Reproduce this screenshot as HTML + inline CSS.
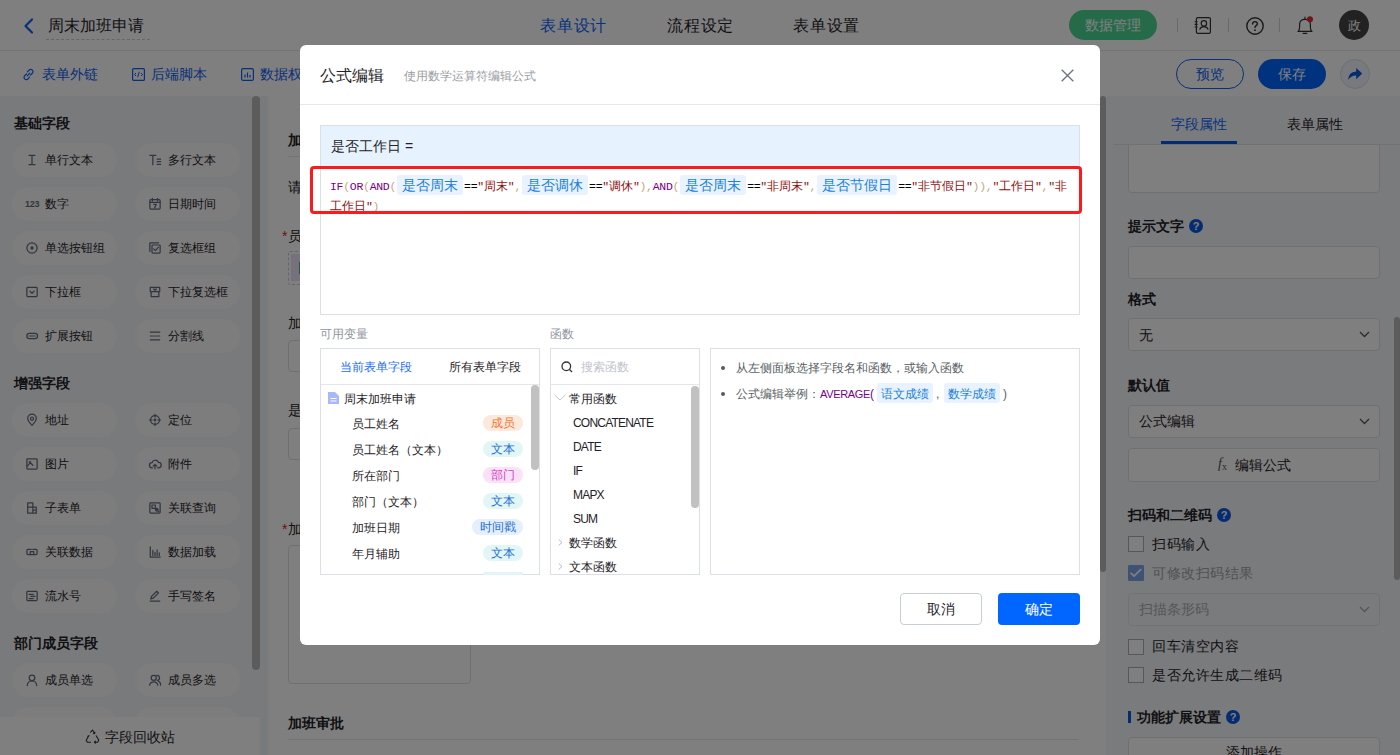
<!DOCTYPE html>
<html><head><meta charset="utf-8">
<style>
*{box-sizing:border-box;margin:0;padding:0}
html,body{width:1400px;height:755px;overflow:hidden;background:#fff;font-family:"Liberation Sans",sans-serif;color:#1f2329}
.a{position:absolute}
.t{position:absolute;white-space:nowrap;line-height:1}
svg{position:absolute;overflow:visible}
/* header */
#hdr{left:0;top:0;width:1400px;height:51px;background:#fff;border-bottom:1px solid #e8e8e8}
#tb{left:0;top:51px;width:1400px;height:45px;background:#fff}
#side{left:0;top:96px;width:268px;height:659px;background:#f3f4f6}
.sec{position:absolute;left:14px;font-size:14px;font-weight:bold;color:#1f2329;line-height:1}
.chip{position:absolute;width:105px;height:34px;border-radius:17px;background:#fafafb}
.chip span{position:absolute;left:33px;top:11px;font-size:12px;line-height:12px;color:#1f2329;white-space:nowrap}
.chip svg{left:14px;top:11px}
#canvas{left:268px;top:96px;width:832px;height:659px;background:#fff}
#rp{left:1106px;top:96px;width:294px;height:659px;background:#f5f6f8}
.inp{position:absolute;left:1128px;width:252px;border:1px solid #dfe1e5;border-radius:4px;background:#fff}
.lbl{position:absolute;left:1128px;font-size:14px;font-weight:bold;line-height:1;color:#1f2329;white-space:nowrap}
.cb{position:absolute;left:1128px;width:16px;height:16px;border:1px solid #a9aeb8;border-radius:0;background:#fff}
.cbt{position:absolute;left:1152px;font-size:14px;letter-spacing:0.5px;line-height:1;color:#1f2329;white-space:nowrap}
.help{position:absolute;width:14px;height:14px;border-radius:50%;background:#0a58e0;color:#fff;font-size:11px;font-weight:bold;line-height:14px;text-align:center}
#ov{left:0;top:0;width:1400px;height:755px;background:rgba(0,0,0,.5)}
/* modal */
#modal{left:300px;top:45px;width:800px;height:600px;background:#fff;border-radius:6px}
.cm{font-family:"Liberation Mono",monospace;font-size:11.5px;letter-spacing:-0.3px}
.cj{font-size:12px;letter-spacing:0}
.kw{color:#770088}.br{color:#c8a678}.st{color:#8e0e0e}.op{color:#000}
.ftag{display:inline-block;letter-spacing:0;background:#e8f3ff;color:#1a7fd9;font-family:"Liberation Sans",sans-serif;font-size:14px;line-height:20px;height:20px;padding:0 5px;border-radius:3px;vertical-align:top;margin:0 1px}
.cm>span:not(.ftag){position:relative;top:2px}
.vrow{position:absolute;left:352px;font-size:12px;line-height:1;color:#1f2329;white-space:nowrap}
.vtag{position:absolute;height:16px;border-radius:8px;font-size:12px;line-height:16px;text-align:center}
.fn{position:absolute;left:573px;font-size:12px;letter-spacing:-0.8px;line-height:1;color:#1f2329;white-space:nowrap}
</style></head><body>

<!-- ============ HEADER ============ -->
<div id="hdr" class="a"></div>
<svg style="left:23px;top:18px" width="11" height="16" viewBox="0 0 11 16"><path d="M9 1.5 L2.5 8 L9 14.5" fill="none" stroke="#1060f0" stroke-width="2.2" stroke-linecap="round" stroke-linejoin="round"/></svg>
<div class="t" style="left:48px;top:18px;font-size:16px;color:#1f2329">周末加班申请</div>
<div class="a" style="left:46px;top:39px;width:104px;border-top:1px dashed #c9cdd4"></div>
<div class="t" style="left:540px;top:18px;font-size:16px;letter-spacing:0.8px;color:#0a66ff">表单设计</div>
<div class="t" style="left:667px;top:18px;font-size:16px;letter-spacing:0.8px;color:#1f2329">流程设定</div>
<div class="t" style="left:793px;top:18px;font-size:16px;letter-spacing:0.8px;color:#1f2329">表单设置</div>
<div class="a" style="left:1069px;top:10px;width:88px;height:30px;border-radius:15px;background:#4ad694"></div>
<div class="t" style="left:1085px;top:18px;font-size:14px;color:#fff">数据管理</div>
<div class="a" style="left:1177px;top:18px;width:1px;height:14px;background:#d0d3d9"></div>
<div class="a" style="left:1228px;top:18px;width:1px;height:14px;background:#d0d3d9"></div>
<div class="a" style="left:1279px;top:18px;width:1px;height:14px;background:#d0d3d9"></div>
<!-- contacts icon -->
<svg style="left:1194px;top:17px" width="18" height="17" viewBox="0 0 18 17" fill="none" stroke="#333" stroke-width="1.2"><rect x="2.4" y="0.6" width="14" height="15.8" rx="1.4"/><circle cx="9.9" cy="6.4" r="2.7"/><path d="M5.6 12.6 Q6.6 9.6 9.9 9.6 Q13.2 9.6 14.2 12.6"/><path d="M0.6 4.8h3M0.6 7.4h3M0.6 10h3" stroke-width="1.1"/></svg>
<!-- help icon -->
<svg style="left:1246px;top:17px" width="18" height="18" viewBox="0 0 18 18"><circle cx="9" cy="9" r="8.2" fill="none" stroke="#333" stroke-width="1.4"/><path d="M6.6 7 Q6.6 4.6 9 4.6 Q11.4 4.6 11.4 6.8 Q11.4 8.2 9.6 9 Q9 9.4 9 10.6" fill="none" stroke="#333" stroke-width="1.4" stroke-linecap="round"/><circle cx="9" cy="13.2" r="0.9" fill="#333"/></svg>
<!-- bell -->
<svg style="left:1297px;top:16px" width="16" height="18" viewBox="0 0 16 18" fill="none" stroke="#333" stroke-width="1.2" stroke-linejoin="round"><path d="M1 15.4 Q2.6 14.2 2.6 11.6 L2.6 8.4 Q2.6 3.4 8 3.4 Q13.4 3.4 13.4 8.4 L13.4 11.6 Q13.4 14.2 15 15.4 Z"/><path d="M8 1.2v2.2M6.2 17.4h3.6" stroke-linecap="round"/><circle cx="13" cy="3.2" r="3" fill="#e02a2a" stroke="none"/></svg>
<div class="a" style="left:1339px;top:10px;width:30px;height:30px;border-radius:50%;background:#444"></div>
<div class="t" style="left:1348px;top:19px;font-size:13px;color:#fff">政</div>

<!-- ============ TOOLBAR ============ -->
<div id="tb" class="a"></div>
<svg style="left:22px;top:68px" width="13" height="13" viewBox="0 0 13 13"><path d="M5.2 7.8 L7.8 5.2 M4.6 5.8 L2.4 8 A2.3 2.3 0 0 0 5.6 11.2 L7.6 9.2 M8.4 7.2 L10.6 5 A2.3 2.3 0 0 0 7.4 1.8 L5.4 3.8" fill="none" stroke="#1060f0" stroke-width="1.2" stroke-linecap="round"/></svg>
<div class="t" style="left:42px;top:67px;font-size:14px;color:#1060f0">表单外链</div>
<svg style="left:132px;top:68px" width="13" height="13" viewBox="0 0 13 13"><rect x="0.6" y="0.6" width="11.8" height="11.8" rx="1" fill="none" stroke="#1060f0" stroke-width="1.2"/><path d="M4 5 L2.6 6.5 L4 8 M9 5 L10.4 6.5 L9 8 M7.3 3.8 L5.7 9.2" fill="none" stroke="#1060f0" stroke-width="1"/></svg>
<div class="t" style="left:151px;top:67px;font-size:14px;color:#1060f0">后端脚本</div>
<svg style="left:241px;top:68px" width="13" height="13" viewBox="0 0 13 13"><rect x="0.6" y="0.6" width="11.8" height="11.8" rx="1.5" fill="none" stroke="#1060f0" stroke-width="1.2"/><path d="M4 9.5V6.5M6.5 9.5V4.5M9 9.5V7" stroke="#1060f0" stroke-width="1.2"/></svg>
<div class="t" style="left:260px;top:67px;font-size:14px;color:#1060f0">数据权限</div>
<div class="a" style="left:1176px;top:59px;width:68px;height:30px;border-radius:15px;border:1px solid #1060f0;background:#fff"></div>
<div class="t" style="left:1196px;top:67px;font-size:14px;color:#1060f0">预览</div>
<div class="a" style="left:1258px;top:59px;width:68px;height:30px;border-radius:15px;background:#0066ff"></div>
<div class="t" style="left:1278px;top:67px;font-size:14px;color:#fff">保存</div>
<div class="a" style="left:1340px;top:59px;width:30px;height:30px;border-radius:50%;border:1px solid #d6def0;background:#f0f4fd"></div>
<svg style="left:1347px;top:67px" width="16" height="14" viewBox="0 0 16 14"><path d="M1 13 Q1.5 5 9.2 4.6 L9.2 1 L15.2 6.6 L9.2 12.2 L9.2 8.4 Q4.2 8.2 1 13 Z" fill="#0a58e0"/></svg>

<!-- ============ SIDEBAR ============ -->
<div id="side" class="a"></div>
<div class="sec" style="top:116px">基础字段</div>
<div class="sec" style="top:376px">增强字段</div>
<div class="sec" style="top:636px">部门成员字段</div>
<div id="chips"><div class="chip" style="left:12px;top:143px"><svg width="12" height="12" viewBox="0 0 14 14" fill="none" stroke="#636b7a" stroke-width="1.45" stroke-linecap="round" stroke-linejoin="round"><path d="M3.5 1.5h7M7 1.5v11M3.5 12.5h7"/></svg><span>单行文本</span></div>
<div class="chip" style="left:135px;top:143px"><svg width="12" height="12" viewBox="0 0 14 14" fill="none" stroke="#636b7a" stroke-width="1.45" stroke-linecap="round" stroke-linejoin="round"><path d="M1 1.5h7M4.5 1.5v11M9.5 6h4M9.5 9h4M9.5 12h4"/></svg><span>多行文本</span></div>
<div class="chip" style="left:12px;top:187px"><div style="position:absolute;left:13px;top:12px;font-size:9px;line-height:10px;font-weight:bold;color:#636b7a;letter-spacing:-0.2px">123</div><span>数字</span></div>
<div class="chip" style="left:135px;top:187px"><svg width="12" height="12" viewBox="0 0 14 14" fill="none" stroke="#636b7a" stroke-width="1.45" stroke-linecap="round" stroke-linejoin="round"><rect x="1" y="2" width="12" height="11" rx="1.2"/><path d="M1 5h12M4 0.5v3M10 0.5v3M5.5 7.5h3L6.5 11.5"/></svg><span>日期时间</span></div>
<div class="chip" style="left:12px;top:231px"><svg width="12" height="12" viewBox="0 0 14 14" fill="none" stroke="#636b7a" stroke-width="1.45" stroke-linecap="round" stroke-linejoin="round"><circle cx="7" cy="7" r="6"/><circle cx="7" cy="7" r="1.2" fill="#636b7a"/></svg><span>单选按钮组</span></div>
<div class="chip" style="left:135px;top:231px"><svg width="12" height="12" viewBox="0 0 14 14" fill="none" stroke="#636b7a" stroke-width="1.45" stroke-linecap="round" stroke-linejoin="round"><path d="M1 11V1h10"/><rect x="3.5" y="3.5" width="9.5" height="9.5" rx="1"/><path d="M5.5 8l2 2 3.5-4"/></svg><span>复选框组</span></div>
<div class="chip" style="left:12px;top:275px"><svg width="12" height="12" viewBox="0 0 14 14" fill="none" stroke="#636b7a" stroke-width="1.45" stroke-linecap="round" stroke-linejoin="round"><rect x="1" y="1.5" width="12" height="11" rx="1"/><path d="M4.5 6l2.5 2.5L9.5 6"/></svg><span>下拉框</span></div>
<div class="chip" style="left:135px;top:275px"><svg width="12" height="12" viewBox="0 0 14 14" fill="none" stroke="#636b7a" stroke-width="1.45" stroke-linecap="round" stroke-linejoin="round"><path d="M1.5 1.5h11v5h-11zM2.5 6.5v6h9v-6M5.5 3.5l1.5 1.5 1.5-1.5"/></svg><span>下拉复选框</span></div>
<div class="chip" style="left:12px;top:319px"><svg width="12" height="12" viewBox="0 0 14 14" fill="none" stroke="#636b7a" stroke-width="1.45" stroke-linecap="round" stroke-linejoin="round"><rect x="1" y="4" width="12.5" height="6" rx="3"/><path d="M4 7h6.5"/></svg><span>扩展按钮</span></div>
<div class="chip" style="left:135px;top:319px"><svg width="12" height="12" viewBox="0 0 14 14" fill="none" stroke="#636b7a" stroke-width="1.45" stroke-linecap="round" stroke-linejoin="round"><path d="M1.5 2.5h11M1.5 7h3M6 7h2M9.5 7h3M1.5 11.5h11"/></svg><span>分割线</span></div>
<div class="chip" style="left:12px;top:403px"><svg width="12" height="12" viewBox="0 0 14 14" fill="none" stroke="#636b7a" stroke-width="1.45" stroke-linecap="round" stroke-linejoin="round"><path d="M7 13.2C4 10 2 7.5 2 5.2A5 5 0 0 1 12 5.2C12 7.5 10 10 7 13.2Z"/><circle cx="7" cy="5.3" r="1.8"/></svg><span>地址</span></div>
<div class="chip" style="left:135px;top:403px"><svg width="12" height="12" viewBox="0 0 14 14" fill="none" stroke="#636b7a" stroke-width="1.45" stroke-linecap="round" stroke-linejoin="round"><circle cx="7" cy="7" r="5.2"/><circle cx="7" cy="7" r="1" fill="#636b7a"/><path d="M7 0.5v3M7 10.5v3M0.5 7h3M10.5 7h3"/></svg><span>定位</span></div>
<div class="chip" style="left:12px;top:447px"><svg width="12" height="12" viewBox="0 0 14 14" fill="none" stroke="#636b7a" stroke-width="1.45" stroke-linecap="round" stroke-linejoin="round"><rect x="1" y="1" width="12" height="12" rx="1"/><path d="M1.5 9.5L5 5.5l3 3M3.5 4.5h2"/></svg><span>图片</span></div>
<div class="chip" style="left:135px;top:447px"><svg width="12" height="12" viewBox="0 0 14 14" fill="none" stroke="#636b7a" stroke-width="1.45" stroke-linecap="round" stroke-linejoin="round"><path d="M4 11.5H3.5A3 3 0 0 1 3.5 5.5 4 4 0 0 1 11 5 3 3 0 0 1 11 11.5H10M7 12.5V7.5M5 9.5l2-2 2 2"/></svg><span>附件</span></div>
<div class="chip" style="left:12px;top:491px"><svg width="12" height="12" viewBox="0 0 14 14" fill="none" stroke="#636b7a" stroke-width="1.45" stroke-linecap="round" stroke-linejoin="round"><path d="M2 1h6v12H2zM2 6h10v7H8M8 9.5h4"/></svg><span>子表单</span></div>
<div class="chip" style="left:135px;top:491px"><svg width="12" height="12" viewBox="0 0 14 14" fill="none" stroke="#636b7a" stroke-width="1.45" stroke-linecap="round" stroke-linejoin="round"><rect x="1" y="1" width="12" height="12" rx="1"/><path d="M3.5 3.5h4v4h-4zM8.5 8.5l3 3"/><circle cx="9" cy="9" r="1.5"/></svg><span>关联查询</span></div>
<div class="chip" style="left:12px;top:535px"><svg width="12" height="12" viewBox="0 0 14 14" fill="none" stroke="#636b7a" stroke-width="1.45" stroke-linecap="round" stroke-linejoin="round"><path d="M6 4H2.5A1.5 1.5 0 0 0 1 5.5v3A1.5 1.5 0 0 0 2.5 10H6M8 4h3.5A1.5 1.5 0 0 1 13 5.5v3A1.5 1.5 0 0 1 11.5 10H8M5 6.5h4v3.5H5z"/></svg><span>关联数据</span></div>
<div class="chip" style="left:135px;top:535px"><svg width="12" height="12" viewBox="0 0 14 14" fill="none" stroke="#636b7a" stroke-width="1.45" stroke-linecap="round" stroke-linejoin="round"><path d="M1.5 1v12h11.5M4.5 5v6M7 7.5v3.5M9.5 4.5v6.5M12 8v3"/></svg><span>数据加载</span></div>
<div class="chip" style="left:12px;top:579px"><svg width="12" height="12" viewBox="0 0 14 14" fill="none" stroke="#636b7a" stroke-width="1.45" stroke-linecap="round" stroke-linejoin="round"><rect x="1" y="1.5" width="12" height="11" rx="1"/><path d="M3.5 5h5M5.5 7.5h5M3.5 10h5"/></svg><span>流水号</span></div>
<div class="chip" style="left:135px;top:579px"><svg width="12" height="12" viewBox="0 0 14 14" fill="none" stroke="#636b7a" stroke-width="1.45" stroke-linecap="round" stroke-linejoin="round"><path d="M2 10.5l1-3 6-6 2 2-6 6zM1.5 13h11"/></svg><span>手写签名</span></div>
<div class="chip" style="left:12px;top:663px"><svg width="12" height="12" viewBox="0 0 14 14" fill="none" stroke="#636b7a" stroke-width="1.45" stroke-linecap="round" stroke-linejoin="round"><circle cx="7" cy="4.5" r="3.3"/><path d="M1.5 13.5A5.5 5.5 0 0 1 12.5 13.5"/></svg><span>成员单选</span></div>
<div class="chip" style="left:135px;top:663px"><svg width="12" height="12" viewBox="0 0 14 14" fill="none" stroke="#636b7a" stroke-width="1.45" stroke-linecap="round" stroke-linejoin="round"><circle cx="5.5" cy="4.5" r="3"/><path d="M0.8 13A4.8 4.8 0 0 1 10.2 13M9 1.5A3 3 0 0 1 9.5 7.5M11 8.5A4.5 4.5 0 0 1 13.5 13"/></svg><span>成员多选</span></div>
<div class="chip" style="left:12px;top:707px"><svg width="12" height="12" viewBox="0 0 14 14" fill="none" stroke="#636b7a" stroke-width="1.45" stroke-linecap="round" stroke-linejoin="round"><rect x="1.5" y="1.5" width="11" height="11" rx="2"/></svg><span>部门单选</span></div>
<div class="chip" style="left:135px;top:707px"><svg width="12" height="12" viewBox="0 0 14 14" fill="none" stroke="#636b7a" stroke-width="1.45" stroke-linecap="round" stroke-linejoin="round"><rect x="1.5" y="1.5" width="11" height="11" rx="2"/></svg><span>部门多选</span></div></div><!--/chips-->
<div class="a" style="left:252px;top:96px;width:8px;height:574px;border-radius:4px;background:#b8b8b8"></div>
<div class="a" style="left:0;top:717px;width:260px;height:38px;background:#fff"></div>
<svg style="left:85px;top:729px" width="15" height="15" viewBox="0 0 15 15" fill="none" stroke="#333" stroke-width="1.1" stroke-linecap="round" stroke-linejoin="round"><path d="M5.6 3.2L7.5 1 9.6 4.4M8.6 4.6l1.1-0.2 0.2-1.1M11.2 6.8l2.6 4.4-1.2 2H9.4M10.4 12.2l-1 1 1 1M5.6 13.2H2.4l-1.2-2 2.4-4.2M2.6 7.2l1 0.2 0.4-1"/></svg>
<div class="t" style="left:105px;top:730px;font-size:14px;color:#1f2329">字段回收站</div>

<!-- ============ CANVAS ============ -->
<div id="canvas" class="a"></div>
<div class="t" style="left:288px;top:133px;font-size:14px;font-weight:bold;color:#1f2329">加班申请</div>
<div class="a" style="left:288px;top:156px;width:790px;height:1px;background:#e5e6eb"></div>
<div class="t" style="left:288px;top:180px;font-size:14px;color:#1f2329">请填写</div>
<div class="t" style="left:282px;top:229px;font-size:14px;color:#1f2329"><span style="color:#e02020;margin-right:1px">*</span>员工姓名</div>
<div class="a" style="left:288px;top:251px;width:182px;height:34px;border:1px dashed #c9cdd4;border-radius:2px"></div>
<div class="a" style="left:291px;top:254px;width:60px;height:27px;background:#efe0fa"></div><div class="a" style="left:299px;top:262px;width:3px;height:12px;background:#3fbf6f"></div>
<div class="t" style="left:288px;top:316px;font-size:14px;color:#1f2329">加班日期</div>
<div class="a" style="left:288px;top:340px;width:182px;height:32px;border:1px solid #dfe1e5;border-radius:4px"></div>
<div class="t" style="left:288px;top:403px;font-size:14px;color:#1f2329">是否工作日</div>
<div class="a" style="left:288px;top:428px;width:182px;height:32px;border:1px solid #dfe1e5;border-radius:4px"></div>
<div class="t" style="left:282px;top:522px;font-size:14px;color:#1f2329"><span style="color:#e02020;margin-right:1px">*</span>加班事由</div>
<div class="a" style="left:288px;top:545px;width:183px;height:139px;border:1px solid #dfe1e5;border-radius:4px"></div>
<div class="t" style="left:288px;top:716px;font-size:14px;font-weight:bold;color:#1f2329">加班审批</div>
<div class="a" style="left:288px;top:739px;width:790px;height:1px;background:#e5e6eb"></div>

<!-- ============ RIGHT PANEL ============ -->
<div id="rp" class="a"></div>
<div id="rpc"><div class="a" style="left:1100px;top:96px;width:6px;height:476px;border-radius:3px;background:#b9b9b9"></div>
<div class="t" style="left:1171px;top:117px;font-size:14px;color:#0a66ff">字段属性</div>
<div class="t" style="left:1287px;top:117px;font-size:14px;color:#1f2329">表单属性</div>
<div class="a" style="left:1114px;top:144px;width:286px;height:1px;background:#e0e2e6"></div>
<div class="a" style="left:1161px;top:141px;width:76px;height:3px;background:#0a58e0"></div>
<div class="inp" style="top:130px;height:63px"></div>
<div class="a" style="left:1106px;top:96px;width:294px;height:49px;background:#f5f6f8"></div>
<div class="t" style="left:1171px;top:117px;font-size:14px;color:#0a66ff">字段属性</div>
<div class="t" style="left:1287px;top:117px;font-size:14px;color:#1f2329">表单属性</div>
<div class="a" style="left:1114px;top:144px;width:286px;height:1px;background:#e0e2e6"></div>
<div class="a" style="left:1161px;top:141px;width:76px;height:3px;background:#0a58e0"></div>
<div class="lbl" style="top:219px">提示文字</div>
<div class="help" style="left:1189px;top:219px">?</div>
<div class="inp" style="top:246px;height:33px"></div>
<div class="lbl" style="top:292px">格式</div>
<div class="inp" style="top:318px;height:33px"></div>
<div class="t" style="left:1139px;top:328px;font-size:14px;color:#1f2329">无</div>
<svg style="left:1359px;top:331px" width="11" height="7" viewBox="0 0 11 7"><path d="M1 1l4.5 4.5L10 1" fill="none" stroke="#555" stroke-width="1.3"/></svg>
<div class="lbl" style="top:378px">默认值</div>
<div class="inp" style="top:405px;height:33px"></div>
<div class="t" style="left:1139px;top:414px;font-size:14px;color:#1f2329">公式编辑</div>
<svg style="left:1359px;top:418px" width="11" height="7" viewBox="0 0 11 7"><path d="M1 1l4.5 4.5L10 1" fill="none" stroke="#555" stroke-width="1.3"/></svg>
<div class="inp" style="top:448px;height:34px"></div>
<div class="t" style="left:1218px;top:457px;font-size:14px;font-style:italic;font-family:'Liberation Serif',serif;color:#555">f<span style="font-size:10px;font-style:normal;position:relative;top:2px">x</span></div>
<div class="t" style="left:1235px;top:458px;font-size:14px;color:#1f2329">编辑公式</div>
<div class="lbl" style="top:508px">扫码和二维码</div>
<div class="help" style="left:1217px;top:508px">?</div>
<div class="cb" style="top:536px"></div><div class="cbt" style="top:537px">扫码输入</div>
<div class="cb" style="top:565px;background:#7ca4e8;border-color:#7ca4e8;border-radius:1px"><svg style="left:0;top:0" width="14" height="14" viewBox="0 0 14 14"><path d="M1.6 6.8l3.4 3.3 7.2-7" fill="none" stroke="#fff" stroke-width="1.8"/></svg></div><div class="cbt" style="top:566px;color:#a0a4ab">可修改扫码结果</div>
<div class="inp" style="top:593px;height:33px;background:#f5f6f8;border-color:#e5e6eb"></div>
<div class="t" style="left:1139px;top:602px;font-size:14px;color:#a9adb4">扫描条形码</div>
<svg style="left:1359px;top:606px" width="11" height="7" viewBox="0 0 11 7"><path d="M1 1l4.5 4.5L10 1" fill="none" stroke="#aaa" stroke-width="1.3"/></svg>
<div class="cb" style="top:639px"></div><div class="cbt" style="top:639px">回车清空内容</div>
<div class="cb" style="top:667px"></div><div class="cbt" style="top:668px">是否允许生成二维码</div>
<div class="a" style="left:1128px;top:711px;width:3px;height:12px;background:#0a58e0"></div>
<div class="lbl" style="left:1137px;top:710px">功能扩展设置</div>
<div class="help" style="left:1226px;top:710px">?</div>
<div class="inp" style="top:737px;height:33px"></div>
<div class="t" style="left:1226px;top:745px;font-size:14px;color:#1f2329">添加操作</div>
<div class="a" style="left:1394px;top:317px;width:6px;height:263px;border-radius:3px;background:#b9b9b9"></div></div><!--/rpc-->

<!-- ============ OVERLAY ============ -->
<div id="ov" class="a"></div>

<!-- ============ MODAL ============ -->
<div id="modal" class="a"></div>
<div id="mc"><div class="t" style="left:320px;top:68px;font-size:16px;color:#1f2329">公式编辑</div>
<div class="t" style="left:404px;top:70px;font-size:12px;color:#9a9da3">使用数学运算符编辑公式</div>
<svg style="left:1061px;top:69px" width="13" height="13" viewBox="0 0 13 13"><path d="M0.7 0.7L12.3 12.3M12.3 0.7L0.7 12.3" stroke="#6b6f76" stroke-width="1.3"/></svg>
<div class="a" style="left:300px;top:104px;width:800px;height:1px;background:#e8e8e8"></div>
<div class="a" style="left:320px;top:125px;width:760px;height:190px;border:1px solid #dcdfe6;background:#fff"></div>
<div class="a" style="left:321px;top:126px;width:758px;height:40px;background:#e6f2fd"></div>
<div class="t" style="left:331px;top:139px;font-size:14px;color:#1f2329">是否工作日 =</div>
<div class="t cm" style="left:330px;top:175px;line-height:20px;height:20px"><span class="kw">IF</span><span class="br">(</span><span class="kw">OR</span><span class="br">(</span><span class="kw">AND</span><span class="br">(</span><span class="ftag">是否周末</span><span class="op">==</span><span class="st">"<span class="cj">周末</span>"</span><span class="br">,</span><span class="ftag">是否调休</span><span class="op">==</span><span class="st">"<span class="cj">调休</span>"</span><span class="br">),</span><span class="kw">AND</span><span class="br">(</span><span class="ftag">是否周末</span><span class="op">==</span><span class="st">"<span class="cj">非周末</span>"</span><span class="br">,</span><span class="ftag">是否节假日</span><span class="op">==</span><span class="st">"<span class="cj">非节假日</span>"</span><span class="br">)),</span><span class="st">"<span class="cj">工作日</span>"</span><span class="br">,</span><span class="st">"<span class="cj">非</span></span></div>
<div class="t cm" style="left:330px;top:195px;line-height:20px;height:20px"><span class="st"><span class="cj">工作日</span>"</span><span class="br">)</span></div>
<div class="a" style="left:310px;top:166px;width:772px;height:48px;border:3px solid #fe1a1a;border-radius:4px"></div>
<div class="t" style="left:320px;top:328px;font-size:12px;color:#8f959e">可用变量</div>
<div class="t" style="left:550px;top:328px;font-size:12px;color:#8f959e">函数</div>
<div class="a" style="left:320px;top:348px;width:220px;height:227px;border:1px solid #dcdfe6"></div>
<div class="a" style="left:321px;top:384px;width:218px;height:1px;background:#e4e6eb"></div>
<div class="t" style="left:340px;top:361px;font-size:12px;color:#1a6cff">当前表单字段</div>
<div class="t" style="left:449px;top:361px;font-size:12px;color:#1f2329">所有表单字段</div>
<svg style="left:328px;top:392px" width="11" height="12" viewBox="0 0 11 12"><path d="M0 0h7l4 4v8H0z" fill="#a8b8f8"/><path d="M2.5 6.5h6M2.5 9h6" stroke="#fff" stroke-width="1"/></svg>
<div class="t" style="left:344px;top:393px;font-size:12px;color:#1f2329">周末加班申请</div>
<div class="vrow" style="top:418px">员工姓名</div>
<div class="vtag" style="left:483px;top:415px;width:40px;background:#fde8dc;color:#f07a32">成员</div>
<div class="vrow" style="top:444px">员工姓名（文本）</div>
<div class="vtag" style="left:483px;top:441px;width:40px;background:#e3f6f6;color:#1f6fd6">文本</div>
<div class="vrow" style="top:470px">所在部门</div>
<div class="vtag" style="left:483px;top:467px;width:40px;background:#fbe1f8;color:#d33fc4">部门</div>
<div class="vrow" style="top:496px">部门（文本）</div>
<div class="vtag" style="left:483px;top:493px;width:40px;background:#e3f6f6;color:#1f6fd6">文本</div>
<div class="vrow" style="top:522px">加班日期</div>
<div class="vtag" style="left:472px;top:519px;width:51px;background:#e6effd;color:#1f6fd6">时间戳</div>
<div class="vrow" style="top:548px">年月辅助</div>
<div class="vtag" style="left:483px;top:545px;width:40px;background:#e3f6f6;color:#1f6fd6">文本</div>
<div class="vtag" style="left:483px;top:572px;width:40px;height:3px;background:#e3f6f6"></div>
<div class="a" style="left:531px;top:385px;width:8px;height:85px;border-radius:4px;background:#c1c1c1"></div>
<div class="a" style="left:550px;top:348px;width:150px;height:227px;border:1px solid #dcdfe6"></div>
<div class="a" style="left:551px;top:384px;width:148px;height:1px;background:#e4e6eb"></div>
<svg style="left:561px;top:361px" width="12" height="12" viewBox="0 0 12 12"><circle cx="5.3" cy="5.3" r="4.3" fill="none" stroke="#333" stroke-width="1.3"/><path d="M8.5 8.5L11 11" stroke="#333" stroke-width="1.3"/></svg>
<div class="t" style="left:581px;top:361px;font-size:12px;color:#c0c4cc">搜索函数</div>
<svg style="left:554px;top:394px" width="12" height="7" viewBox="0 0 12 7"><path d="M0.5 0.8L6 6L11.5 0.8" fill="none" stroke="#c0cad8" stroke-width="1"/></svg>
<div class="t" style="left:569px;top:393px;font-size:12px;color:#1f2329">常用函数</div>
<div class="fn" style="top:417px">CONCATENATE</div>
<div class="fn" style="top:441px">DATE</div>
<div class="fn" style="top:465px">IF</div>
<div class="fn" style="top:489px">MAPX</div>
<div class="fn" style="top:513px">SUM</div>
<svg style="left:558px;top:539px" width="5" height="7" viewBox="0 0 5 7"><path d="M0.6 0.5L4 3.5L0.6 6.5" fill="none" stroke="#b4bccb" stroke-width="1"/></svg>
<div class="t" style="left:569px;top:537px;font-size:12px;color:#1f2329">数学函数</div>
<svg style="left:558px;top:563px" width="5" height="7" viewBox="0 0 5 7"><path d="M0.6 0.5L4 3.5L0.6 6.5" fill="none" stroke="#b4bccb" stroke-width="1"/></svg>
<div class="t" style="left:569px;top:561px;font-size:12px;color:#1f2329">文本函数</div>
<div class="a" style="left:691px;top:386px;width:8px;height:122px;border-radius:4px;background:#c1c1c1"></div>
<div class="a" style="left:710px;top:348px;width:370px;height:227px;border:1px solid #dcdfe6"></div>
<div class="a" style="left:721px;top:366px;width:4px;height:4px;border-radius:50%;background:#555a63"></div>
<div class="a" style="left:721px;top:392px;width:4px;height:4px;border-radius:50%;background:#555a63"></div>
<div class="t" style="left:736px;top:362px;font-size:12px;color:#5a5f66">从左侧面板选择字段名和函数，或输入函数</div>
<div class="t" style="left:736px;top:388px;font-size:12px;color:#5a5f66">公式编辑举例：<span style="color:#770088;font-size:11px;letter-spacing:-0.35px">AVERAGE</span><span style="color:#770088">(</span></div>
<div class="a" style="left:877px;top:383px;width:56px;height:20px;border-radius:3px;background:#e8f3ff"></div>
<div class="t" style="left:881px;top:388px;font-size:12px;color:#1a7fd9">语文成绩</div>
<div class="t" style="left:936px;top:388px;font-size:12px;color:#5a5f66">,</div>
<div class="a" style="left:944px;top:383px;width:56px;height:20px;border-radius:3px;background:#e8f3ff"></div>
<div class="t" style="left:948px;top:388px;font-size:12px;color:#1a7fd9">数学成绩</div>
<div class="t" style="left:1003px;top:388px;font-size:12px;color:#5a5f66">)</div>
<div class="a" style="left:900px;top:593px;width:82px;height:32px;border:1px solid #c9cdd4;border-radius:4px;background:#fff"></div>
<div class="t" style="left:927px;top:602px;font-size:14px;color:#1f2329">取消</div>
<div class="a" style="left:998px;top:593px;width:82px;height:32px;border-radius:4px;background:#0066ff"></div>
<div class="t" style="left:1025px;top:602px;font-size:14px;color:#fff">确定</div></div><!--/mc-->

</body></html>
